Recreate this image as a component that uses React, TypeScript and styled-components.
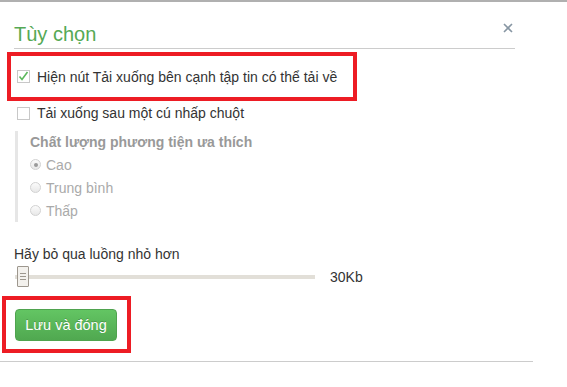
import styled, { createGlobalStyle } from "styled-components";

const GlobalStyle = createGlobalStyle`
    html, body {
        margin: 0;
        padding: 0;
        background: #fff;
    }
    body {
        font-family: "Liberation Sans", Arial, sans-serif;
        font-size: 14px;
        color: #333;
    }
`

const Page = styled.div`
    border-top: 2px solid #b0b0b0;
    height: 385px;
`

const Dialog = styled.div`
    width: 501px;
    padding-left: 14px;
`

const Header = styled.div`
    display: flex;
    justify-content: space-between;
    align-items: flex-start;
    padding-top: 20px;
    padding-bottom: 2px;
    border-bottom: 1px solid #cccccc;

    h1 {
        margin: 0;
        font-size: 20px;
        line-height: 24px;
        font-weight: normal;
        color: #55a955;
    }
`

const Close = styled.button`
    border: 0;
    background: none;
    padding: 0;
    margin: 1px 2px 0 0;
    width: 10px;
    height: 10px;
    display: flex;
    cursor: pointer;
`

// red annotation frame drawn round a part of the form
const Highlight = styled.div<{ $shift: number; $width: number; $top: number; $pad: string }>`
    box-sizing: border-box;
    border: 4px solid #ed1c24;
    margin-top: ${(p) => p.$top}px;
    margin-left: ${(p) => -p.$shift}px;
    width: ${(p) => p.$width}px;
    padding: ${(p) => p.$pad};
`

const CheckRow = styled.label<{ $height?: number; $indent?: number; $top?: number }>`
    display: flex;
    align-items: center;
    height: ${(p) => p.$height || 20}px;
    padding-left: ${(p) => p.$indent || 0}px;
    margin-top: ${(p) => p.$top || 0}px;
    gap: 7px;
`

const Box = styled.span`
    box-sizing: border-box;
    width: 13px;
    height: 13px;
    border: 1px solid #c8c8c8;
    background: #fff;
    display: flex;
    align-items: center;
    justify-content: center;
`

const Group = styled.div`
    margin: 8px 0 0 1px;
    border-left: 3px solid #e6e6e6;
    padding-left: 12px;
`

const Legend = styled.div`
    font-weight: bold;
    color: #999;
    line-height: 22px;
`

const RadioRow = styled.label`
    display: flex;
    align-items: center;
    height: 23px;
    gap: 5px;
    color: #aaa;
`

const Radio = styled.span<{ $on?: boolean }>`
    box-sizing: border-box;
    width: 11px;
    height: 11px;
    border-radius: 50%;
    border: 1px solid #d2d2d2;
    background: linear-gradient(#fbfbfb, #e8e8e8);
    display: flex;
    align-items: center;
    justify-content: center;

    &::after {
        content: "";
        display: ${(p) => (p.$on ? "block" : "none")};
        width: 4px;
        height: 4px;
        border-radius: 50%;
        background: #9a9a9a;
    }
`

const FieldLabel = styled.div`
    margin-top: 22px;
    line-height: 20px;
`

const SliderRow = styled.div`
    display: flex;
    align-items: center;
    height: 22px;
    margin-top: 2px;
`

const Track = styled.div`
    position: relative;
    margin-left: 1px;
    width: 300px;
    height: 4px;
    background: #e2dfd8;
`

const Handle = styled.div`
    position: absolute;
    left: 2px;
    top: -9px;
    box-sizing: border-box;
    width: 12px;
    height: 21px;
    border: 1px solid #9d978e;
    border-radius: 1px;
    background: #f3f1ed;
    display: flex;
    flex-direction: column;
    align-items: center;
    justify-content: center;
    gap: 2px;

    span {
        display: block;
        width: 6px;
        height: 1px;
        background: #9d978e;
    }
`

const Value = styled.span`
    margin-left: 15px;
`

const SaveButton = styled.button`
    box-sizing: border-box;
    width: 102px;
    height: 32px;
    border: 1px solid #4fa34f;
    border-radius: 4px;
    background: linear-gradient(#63c563, #50a850);
    color: #fff;
    font-family: "Liberation Sans", Arial, sans-serif;
    font-size: 14.5px;
    text-shadow: 0 -1px 0 rgba(0, 0, 0, 0.2);
    cursor: pointer;
    padding: 0;
`

const Footer = styled.div`
    margin: 8px 0 0 -14px;
    width: 533px;
    border-top: 1px solid #cccccc;
`

function CheckMark() {
    return (
        <svg width="11" height="11" viewBox="0 0 11 11">
            <path d="M1.5 5.5 L4 8.5 L9.5 1" fill="none" stroke="#5cb85c" strokeWidth="1.6" />
        </svg>
    )
}

export default function App() {
    return (
        <>
            <GlobalStyle />
            <Page>
                <Dialog>
                    <Header>
                        <h1>Tùy chọn</h1>
                        <Close aria-label="Đóng">
                            <svg width="10" height="10" viewBox="0 0 10 10">
                                <path d="M1 1 L9 9 M9 1 L1 9" stroke="#8796a3" strokeWidth="1.6" />
                            </svg>
                        </Close>
                    </Header>

                    <Highlight $top={3} $shift={7} $width={350} $pad="0 0 0 6px">
                        <CheckRow $height={41}>
                            <Box><CheckMark /></Box>
                            Hiện nút Tải xuống bên cạnh tập tin có thể tải về
                        </CheckRow>
                    </Highlight>

                    <CheckRow $indent={3} $top={2}>
                        <Box />
                        Tải xuống sau một cú nhấp chuột
                    </CheckRow>

                    <Group>
                        <Legend>Chất lượng phương tiện ưa thích</Legend>
                        <RadioRow><Radio $on />Cao</RadioRow>
                        <RadioRow><Radio />Trung bình</RadioRow>
                        <RadioRow><Radio />Thấp</RadioRow>
                    </Group>

                    <FieldLabel>Hãy bỏ qua luồng nhỏ hơn</FieldLabel>
                    <SliderRow>
                        <Track>
                            <Handle><span /><span /><span /></Handle>
                        </Track>
                        <Value>30Kb</Value>
                    </SliderRow>

                    <Highlight $top={8} $shift={12} $width={129} $pad="9px 0 8px 9px">
                        <SaveButton>Lưu và đóng</SaveButton>
                    </Highlight>

                    <Footer />
                </Dialog>
            </Page>
        </>
    )
}
